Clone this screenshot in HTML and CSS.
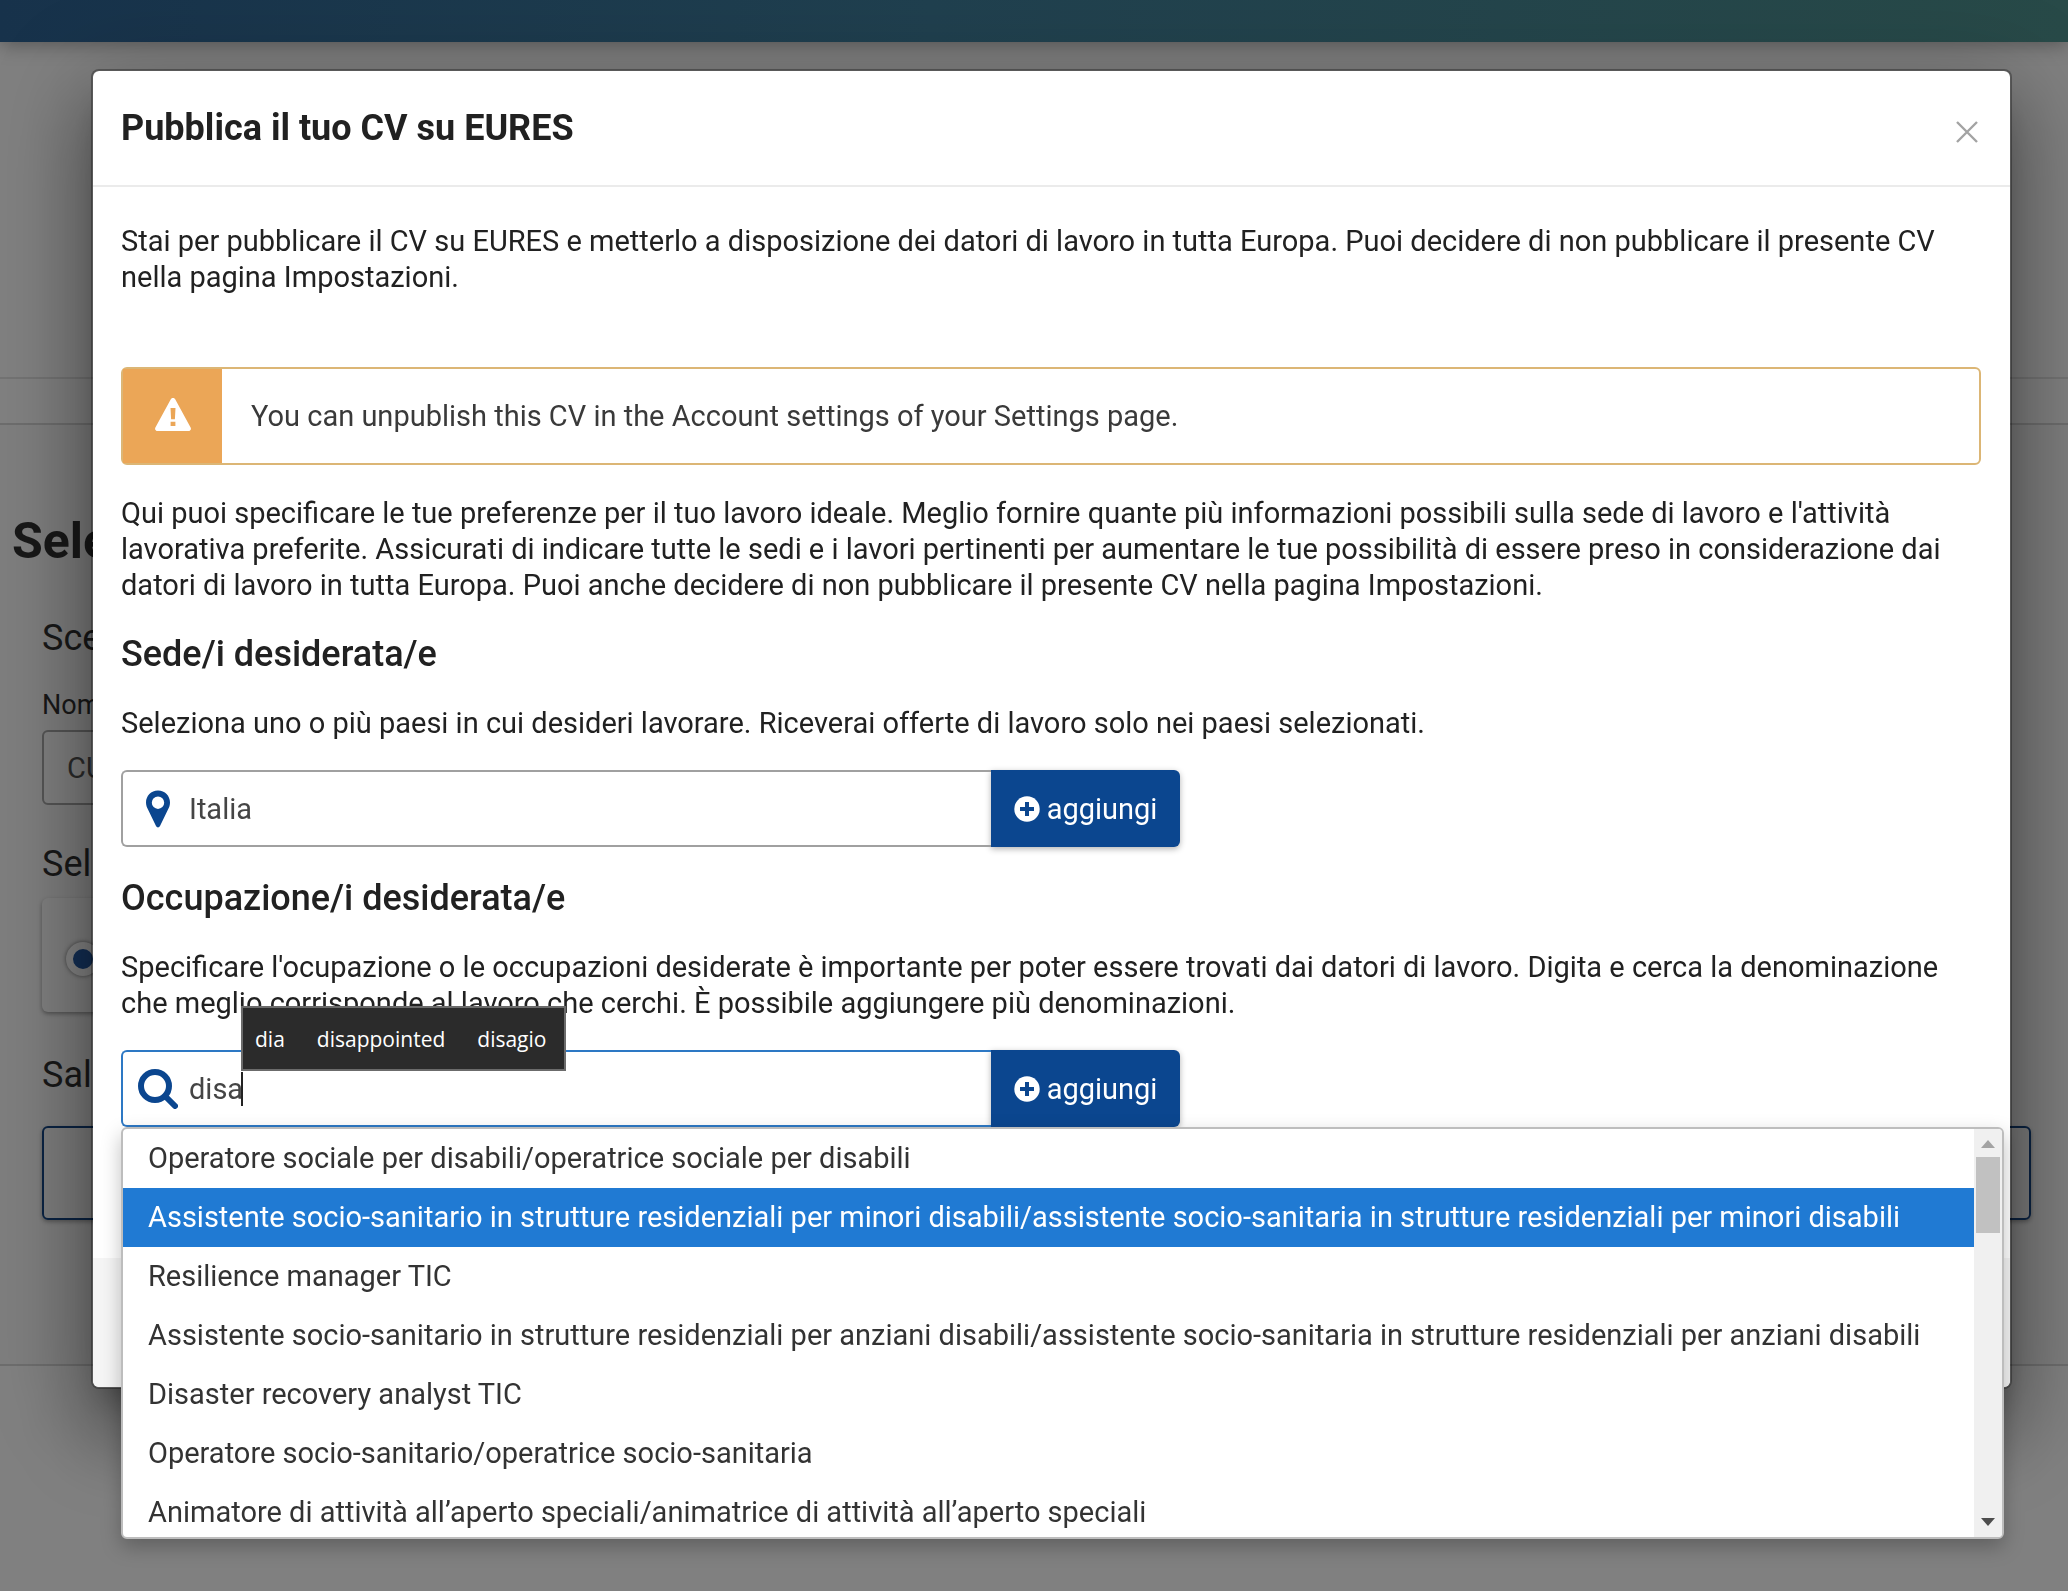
FILE: index.html
```html
<!DOCTYPE html>
<html lang="it">
<head>
<meta charset="utf-8">
<title>Pubblica il tuo CV su EURES</title>
<link rel="stylesheet" href="styles.css">
</head>
<body>
<div class="page" aria-hidden="true">
  <header class="topbar"></header>
  <div class="hero"></div>
  <div class="crumbs"></div>
  <main class="content">
    <h1 class="page-title">Sele</h1>
    <section class="steps">
      <h2 class="step-title">Sce</h2>
      <label class="field-label" for="cv-name">Nom</label>
      <input class="field" id="cv-name" type="text" value="CU" tabindex="-1">
      <h2 class="step-title step-title-select">Sel</h2>
      <div class="option-card"><input class="option-radio" type="radio" aria-label="Seleziona" checked tabindex="-1"></div>
      <h2 class="step-title step-title-save">Sal</h2>
      <button class="outline-button" type="button" aria-label="Salva" tabindex="-1"></button>
    </section>
  </main>
</div>

<div class="overlay">
  <section class="modal" role="dialog" aria-modal="true" aria-labelledby="modal-title">
    <header class="modal-header">
      <h2 class="modal-title" id="modal-title">Pubblica il tuo CV su EURES</h2>
      <button class="close" type="button" aria-label="Chiudi">
        <svg viewBox="0 0 22 22" width="22" height="22"><path d="M1 1 21 21M21 1 1 21" fill="none" stroke="#a3a3a3" stroke-width="2.400"/></svg>
      </button>
    </header>
    <div class="modal-body">
      <p class="text intro">Stai per pubblicare il CV su EURES e metterlo a disposizione dei datori di lavoro in tutta Europa. Puoi decidere di non pubblicare il presente CV nella pagina Impostazioni.</p>
      <div class="alert">
        <div class="alert-icon">
          <svg viewBox="0 0 36 33" width="36" height="33"><path fill="#fff" fill-rule="evenodd" d="M15.800 1.300c1-1.700 3.400-1.700 4.400 0l15.400 28.200c.9 1.600-.2 3.500-2.200 3.500H2.600C.6 33-.5 31.100.4 29.500zM15.500 10l.6 11.200h3.800l.6-11.200zM15.600 23.800v4.200h4.800v-4.200z"/></svg>
        </div>
        <p class="alert-text">You can unpublish this CV in the Account settings of your Settings page.</p>
      </div>
      <p class="text">Qui puoi specificare le tue preferenze per il tuo lavoro ideale. Meglio fornire quante più informazioni possibili sulla sede di lavoro e l'attività lavorativa preferite. Assicurati di indicare tutte le sedi e i lavori pertinenti per aumentare le tue possibilità di essere preso in considerazione dai datori di lavoro in tutta Europa. Puoi anche decidere di non pubblicare il presente CV nella pagina Impostazioni.</p>

      <h3 class="section-title"><label for="place">Sede/i desiderata/e</label></h3>
      <p class="text">Seleziona uno o più paesi in cui desideri lavorare. Riceverai offerte di lavoro solo nei paesi selezionati.</p>
      <div class="search">
        <div class="search-box">
          <svg class="search-icon" viewBox="0 0 36 40" width="36" height="40"><path fill="#0b468f" fill-rule="evenodd" d="M18 1.500C11 1.500 6 7 6 13.500c0 3 1 5 2 7l8 16.500c.9 1.900 3.100 1.900 4 0l8-16.500c1-2 2-4 2-7C30 7 25 1.500 18 1.500zm0 6a6.200 6.200 0 1 1 0 12.400A6.200 6.200 0 0 1 18 7.500z"/></svg>
          <input class="search-input" id="place" type="text" value="Italia">
        </div>
        <button class="add" type="button">
          <svg viewBox="0 0 26 26" width="26" height="26"><circle cx="13" cy="13" r="12.700" fill="#fff"/><path d="M13 6v14M6 13h14" stroke="#0b468f" stroke-width="4"/></svg>
          aggiungi
        </button>
      </div>

      <h3 class="section-title"><label for="job">Occupazione/i desiderata/e</label></h3>
      <p class="text">Specificare l'ocupazione o le occupazioni desiderate è importante per poter essere trovati dai datori di lavoro. Digita e cerca la denominazione che meglio corrisponde al lavoro che cerchi. È possibile aggiungere più denominazioni.</p>
      <div class="search">
        <div class="search-box search-box-active">
          <svg class="search-icon" viewBox="0 0 40 40" width="40" height="40"><circle cx="17" cy="17" r="14" fill="none" stroke="#0b468f" stroke-width="6"/><path d="M27.500 27.500 37 37" stroke="#0b468f" stroke-width="6" stroke-linecap="round"/></svg>
          <input class="search-input" id="job" type="text" value="disa">
          <span class="caret"></span>
        </div>
        <button class="add" type="button">
          <svg viewBox="0 0 26 26" width="26" height="26"><circle cx="13" cy="13" r="12.700" fill="#fff"/><path d="M13 6v14M6 13h14" stroke="#0b468f" stroke-width="4"/></svg>
          aggiungi
        </button>
        <div class="ime"><span>dia</span><span>disappointed</span><span>disagio</span></div>
        <div class="dropdown">
          <ul class="options" role="listbox" aria-label="Occupazioni">
            <li class="option" role="option">Operatore sociale per disabili/operatrice sociale per disabili</li>
            <li class="option option-active" role="option" aria-selected="true">Assistente socio-sanitario in strutture residenziali per minori disabili/assistente socio-sanitaria in strutture residenziali per minori disabili</li>
            <li class="option" role="option">Resilience manager TIC</li>
            <li class="option" role="option">Assistente socio-sanitario in strutture residenziali per anziani disabili/assistente socio-sanitaria in strutture residenziali per anziani disabili</li>
            <li class="option" role="option">Disaster recovery analyst TIC</li>
            <li class="option" role="option">Operatore socio-sanitario/operatrice socio-sanitaria</li>
            <li class="option" role="option">Animatore di attività all’aperto speciali/animatrice di attività all’aperto speciali</li>
          </ul>
          <div class="scrollbar">
            <svg viewBox="0 0 14 8" width="14" height="8"><path d="M0 8 7 0l7 8z" fill="#a3a3a3"/></svg>
            <div class="thumb"></div>
            <svg class="scroll-down" viewBox="0 0 14 8" width="14" height="8"><path d="M0 0h14L7 8z" fill="#4d4d4d"/></svg>
          </div>
        </div>
      </div>
    </div>
    <footer class="modal-footer"></footer>
  </section>
</div>
</body>
</html>
```
FILE: styles.css
```css
* { box-sizing: border-box; }
body {
  margin: 0;
  font-family: Roboto, "Liberation Sans", sans-serif;
  font-size: 29px;
  line-height: 36px;
  color: #212121;
  background: #808080;
}
h1, h2, h3, p, ul { margin: 0; padding: 0; }
input, button { font: inherit; margin: 0; }
svg { display: block; flex: none; }

/* Page behind the dialog, in its dimmed colours */
.page { position: fixed; inset: 0; overflow: hidden; color: #181818; }
.topbar {
  height: 42px;
  background: linear-gradient(90deg, #17324b, #20404f 45%, #284a48);
  box-shadow: 0 2px 20px rgba(0, 0, 0, .35);
}
.hero { height: 337px; border-bottom: 2px solid #737373; }
.crumbs { height: 46px; border-bottom: 2px solid #6d6d6d; }
.content { height: 941px; padding: 84px 12px 0; border-bottom: 2px solid #6d6d6d; background: #7e7e7e; }
.page-title { font-size: 50px; line-height: 64px; font-weight: 700; }
.steps { padding: 45px 25px 0 30px; display: flex; flex-direction: column; }
.step-title { font-size: 36px; line-height: 40px; font-weight: 400; }
.field-label { margin-top: 29px; font-size: 27px; }
.field {
  width: 50%;
  height: 75px;
  margin-top: 7px;
  padding: 0 23px;
  border: 2px solid #555;
  border-radius: 6px;
  background: #808080;
  color: #2b2b2b;
}
.step-title-select { margin-top: 39px; }
.option-card {
  width: 50%;
  height: 114px;
  margin-top: 14px;
  padding: 8px 24px 0;
  display: flex;
  align-items: center;
  border-radius: 6px;
  background: #808080;
  box-shadow: 0 2px 4px rgba(0, 0, 0, .35);
}
.option-radio {
  appearance: none;
  width: 34px;
  height: 34px;
  border: 7px solid #868686;
  border-radius: 50%;
  background: #132f55;
  box-shadow: 0 0 4px rgba(0, 0, 0, .5);
}
.step-title-save { margin-top: 43px; }
.outline-button {
  height: 94px;
  margin-top: 31px;
  border: 2px solid #0a2343;
  border-radius: 6px;
  background: transparent;
  box-shadow: 0 2px 4px rgba(0, 0, 0, .3);
}

/* Dialog */
.overlay { position: relative; padding: 69px 56px 202px 91px; }
.modal {
  border: 2px solid rgba(0, 0, 0, .3);
  border-radius: 8px;
  background: #fff;
  background-clip: padding-box;
  box-shadow: 0 22px 30px -14px rgba(0, 0, 0, .3), 0 48px 76px 6px rgba(0, 0, 0, .26), 0 18px 92px 16px rgba(0, 0, 0, .18);
}
.modal-header {
  height: 116px;
  padding: 0 32px 0 28px;
  display: flex;
  align-items: center;
  justify-content: space-between;
  border-bottom: 2px solid #ebebeb;
}
.modal-title { font-size: 36px; line-height: 40px; font-weight: 700; }
.close { padding: 8px 0 0; border: 0; background: none; }
.modal-body { padding: 36px 29px 131px 28px; }
.intro { margin-bottom: 72px; }
.alert {
  display: flex;
  min-height: 98px;
  margin-bottom: 30px;
  border: 2px solid #dcb675;
  border-radius: 6px;
}
.alert-icon {
  width: 99px;
  padding-bottom: 4px;
  display: flex;
  align-items: center;
  justify-content: center;
  background: #eba657;
}
.alert-text { padding: 29px; color: #3a3a3a; }
.section-title { margin: 31px 0; font-size: 36px; line-height: 40px; font-weight: 500; }
.search {
  position: relative;
  display: grid;
  grid-template-columns: 870px 189px;
  height: 77px;
  margin-top: 29px;
}
.search-box {
  position: relative;
  display: flex;
  align-items: center;
  gap: 11px;
  padding-left: 15px;
  border: 2px solid #a0a0a0;
  border-right: 0;
  border-radius: 6px 0 0 6px;
}
.search-box-active { border-color: #2d78c4; }
.search-icon { width: 40px; }
.search-input {
  flex: 1;
  min-width: 0;
  height: 100%;
  padding: 0;
  border: 0;
  outline: 0;
  background: none;
  color: #454545;
}
.add {
  display: flex;
  align-items: center;
  justify-content: center;
  gap: 7px;
  padding: 0;
  border: 0;
  border-radius: 0 6px 6px 0;
  background: #0b468f;
  color: #fff;
  box-shadow: 0 2px 6px rgba(0, 0, 0, .3);
}
.caret { position: absolute; left: 118px; top: 20px; width: 2px; height: 34px; background: #222; }
.ime {
  position: absolute;
  left: 120px;
  top: -44px;
  z-index: 2;
  height: 65px;
  padding: 0 18px 0 12px;
  display: flex;
  align-items: center;
  gap: 32px;
  border: 2px solid #6b6b6b;
  background: #2b2b2b;
  color: #fff;
  font-family: "Open Sans", sans-serif;
  font-size: 21px;
}
.dropdown {
  position: absolute;
  left: 0;
  top: 77px;
  right: -23px;
  height: 412px;
  display: flex;
  border: 2px solid #bdbdbd;
  border-radius: 6px;
  background: #fff;
  overflow: hidden;
  box-shadow: 0 8px 20px rgba(0, 0, 0, .25);
}
.options { flex: 1; min-width: 0; list-style: none; overflow: hidden; }
.option { height: 59px; padding: 0 25px; line-height: 58px; white-space: nowrap; color: #333; }
.option-active { background: #207ad3; color: #fff; }
.scrollbar {
  width: 28px;
  display: flex;
  flex-direction: column;
  align-items: center;
  padding: 11px 0;
  background: #f0f0f0;
}
.thumb { width: 24px; height: 76px; margin-top: 9px; background: #c1c1c1; }
.scroll-down { margin-top: auto; }
.modal-footer { height: 129px; border-radius: 0 0 6px 6px; background: #f5f5f5; }
```
